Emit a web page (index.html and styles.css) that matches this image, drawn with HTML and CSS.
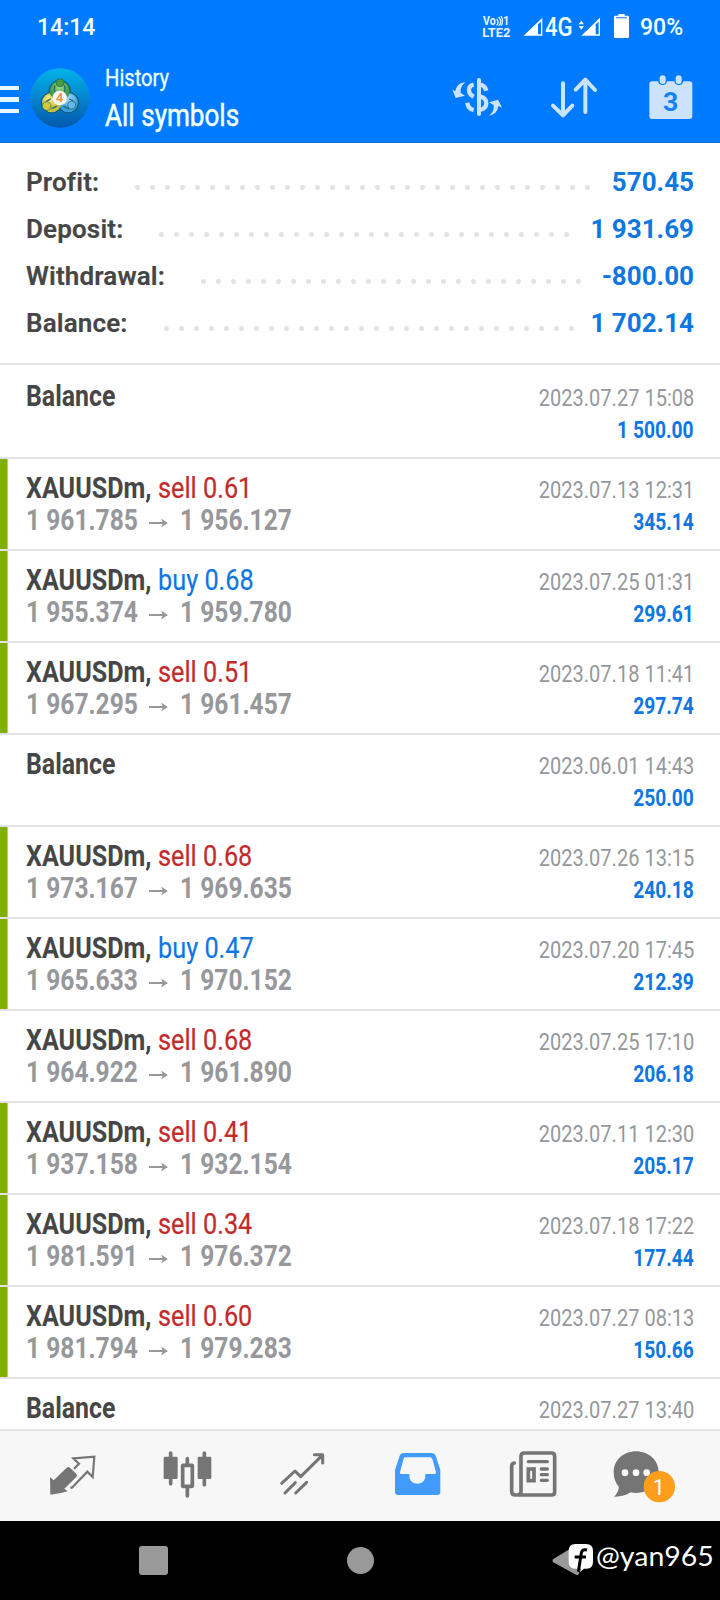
FILE: index.html
```
<!DOCTYPE html>
<html lang="en">
<head>
<meta charset="utf-8">
<title>History</title>
<link rel="stylesheet" href="styles.css">
</head>
<body>
<div class="phone">
  <header class="header">
    <div class="status">
      <span class="clock">14:14</span>
      <div class="status-icons">
        <svg class="volte" width="29" height="48" viewBox="124 0 87 144">
          <text x="127" y="76" textLength="38" lengthAdjust="spacingAndGlyphs">Vo</text>
          <path d="M168 57q8 9 0 19M174 51q12 14 0 26M181 48q9 16 0 29" class="wave"/>
          <text x="187" y="76" textLength="19" lengthAdjust="spacingAndGlyphs">1</text>
          <text x="125" y="112" textLength="84" lengthAdjust="spacingAndGlyphs">LTE2</text>
        </svg>
        <svg class="sig-a" width="20" height="48" viewBox="248 0 60 144"><path fill="#fff" fill-rule="evenodd" d="M250 107 306 53V107zM293 73V103H302V65z"/></svg>
        <span class="net">4G</span>
        <svg class="sig-b" width="23" height="48" viewBox="418 0 69 144"><path fill="#fff" fill-rule="evenodd" d="M428 107 484 53V107zM471 73V103H480V65zM420 73l8-11 8 11zM420 78l8 11 8-11z"/></svg>
        <svg class="battery" width="15" height="48" viewBox="522 0 45 144"><path fill="#fff" fill-rule="evenodd" d="M535 42H554V47H563Q567 47 567 51V110Q567 114 563 114H526Q522 114 522 110V51Q522 47 526 47H535zM528 52V55H561V52z"/></svg>
        <span class="percent">90%</span>
      </div>
    </div>
    <div class="toolbar">
      <div class="burger"><i></i><i></i><i></i></div>
      <svg class="avatar" width="60" height="60" viewBox="0 0 180 180">
        <defs>
          <linearGradient id="sky" x1="0" y1="0" x2="0" y2="1"><stop offset="0" stop-color="#02b4ea"/><stop offset=".5" stop-color="#0684cf"/><stop offset="1" stop-color="#0459ae"/></linearGradient>
          <radialGradient id="gr" cx=".5" cy=".3"><stop offset="0" stop-color="#9fdc88"/><stop offset="1" stop-color="#3a9a48"/></radialGradient>
          <radialGradient id="ye" cx=".4" cy=".3"><stop offset="0" stop-color="#f5ee86"/><stop offset="1" stop-color="#c9c046"/></radialGradient>
          <radialGradient id="bl" cx=".5" cy=".3"><stop offset="0" stop-color="#a5e0ff"/><stop offset="1" stop-color="#3b9ce0"/></radialGradient>
        </defs>
        <circle cx="90" cy="90" r="89" fill="url(#sky)"/>
        <g fill="#0f5a70"><circle cx="89" cy="69" r="33"/><circle cx="65" cy="104" r="32"/><circle cx="115" cy="104" r="32"/></g>
        <circle cx="115" cy="104" r="29" fill="url(#bl)"/>
        <circle cx="65" cy="104" r="29" fill="url(#ye)"/>
        <circle cx="89" cy="69" r="30" fill="url(#gr)"/>
        <g fill="none" stroke="#1d6a66" stroke-width="4" stroke-linecap="round"><path d="M74 54Q72 66 75 76M104 54Q107 66 103 76M61 93Q55 97 50 99M66 121 80 115M118 93Q124 96 128 97M102 115 116 122"/></g>
        <g stroke="#1f5f5a" stroke-width="2">
          <circle cx="90" cy="44" r="12" fill="#45a044"/>
          <circle cx="50" cy="114" r="13" fill="#d2c83e"/>
          <circle cx="125" cy="111" r="12" fill="#62b9ee"/>
        </g>
        <circle cx="89" cy="90" r="22" fill="#f8f6f1"/>
        <text x="89" y="103" class="four">4</text>
      </svg>
      <div class="titles">
        <div class="small-title"><span>History</span></div>
        <div class="big-title"><span>All symbols</span></div>
      </div>
      <svg class="ico-money" width="50" height="95" viewBox="36 144 150 285">
        <g fill="none" stroke="#cbe3ff" stroke-linecap="round">
          <path stroke-width="12" d="M117 240V342"/>
          <path stroke-width="13" stroke-linecap="butt" d="M101 254Q87 257 87 270Q87 283 101 290M101 330Q84 326 82 308M119 254Q135 256 139 272M119 289Q140 293 139 311Q138 326 119 330"/>
        </g>
        <path fill="#cbe3ff" d="M76 247Q50 249 46 274L37 269 47 294 75 287 62 279Q60 260 76 247zM147 347Q172 343 175 318L186 323 174 299 147 307 161 315Q164 334 147 347z"/>
      </svg>
      <svg class="ico-sort" width="48" height="95" viewBox="330 144 144 285">
        <path fill="none" stroke="#cbe3ff" stroke-width="12" stroke-linecap="round" stroke-linejoin="round" d="M369 250V345M339 317 369 346 397 317M436 336V240M407 269 436 239 465 270"/>
      </svg>
      <svg class="ico-cal" width="44" height="95" viewBox="628 144 132 285">
        <rect x="629" y="244" width="129" height="113" rx="9" fill="#cbe3ff"/>
        <rect x="655" y="222" width="27" height="33" rx="13" fill="#007bff"/><rect x="704" y="222" width="27" height="33" rx="13" fill="#007bff"/>
        <rect x="660" y="226" width="18" height="26" rx="9" fill="#cbe3ff"/><rect x="708" y="226" width="18" height="26" rx="9" fill="#cbe3ff"/>
        <text x="693" y="333" class="cal-num">3</text>
      </svg>
    </div>
  </header>

  <section class="summary">
    <div class="sum"><b>Profit:</b><i class="dots d31"></i><em>570.45</em></div>
    <div class="sum"><b>Deposit:</b><i class="dots d28"></i><em>1 931.69</em></div>
    <div class="sum"><b>Withdrawal:</b><i class="dots d26"></i><em>-800.00</em></div>
    <div class="sum"><b>Balance:</b><i class="dots d28"></i><em>1 702.14</em></div>
  </section>

  <main class="list" id="list"></main>

  <nav class="tabs">
    <svg viewBox="45 33 345 270">
      <path fill="#757575" d="M150 171 161 181 200 143Q205 139 210 143L230 163Q233 167 229 171L193 206 203 214Q180 222 151 224z"/>
      <path fill="none" stroke="#757575" stroke-width="6.5" d="M211 203H216L262 155 278 171 283 110 220 115 237 131 222 146"/>
    </svg>
    <svg viewBox="45 33 345 270">
      <g fill="#757575"><rect x="146" y="110" width="42" height="67" rx="4"/><rect x="248" y="110" width="41" height="67" rx="4"/></g>
      <g fill="none" stroke="#757575" stroke-width="11" stroke-linecap="round"><path d="M167 99V191M268 99V194M217 116V133M217 203V228"/><rect x="203" y="136" width="29" height="63" rx="1"/></g>
    </svg>
    <svg viewBox="735 33 345 270">
      <path fill="none" stroke="#757575" stroke-width="9" stroke-linecap="round" stroke-linejoin="round" d="M845 190 885 153 902 170 966 107M943 104H968V129M855 219 886 188M887 219 920 187"/>
    </svg>
    <svg viewBox="0 33 345 270">
      <path fill="#429cff" d="M130 99H216Q224 99 227 107L241 149V216Q241 225 232 225H114Q105 225 105 216V151L119 107Q122 99 130 99z"/>
      <path fill="#f7f7f7" d="M136 112H211Q215 112 217 117L228 156Q229 162 223 162H196Q198 191 172 191Q146 191 148 162H124Q118 162 120 156L131 116Q132 112 136 112z"/>
    </svg>
    <svg viewBox="345 33 345 270">
      <g fill="none" stroke="#757575" stroke-width="11" stroke-linecap="round"><path d="M463 129Q455 130 455 139V214Q455 225 466 225H575Q584 225 584 215V109Q584 99 574 99H493Q483 99 483 109V214Q483 225 472 225"/><path stroke-width="10" d="M505 125H562M544 147H562M544 164H562M544 181H562"/><rect x="505" y="147" width="17" height="35"/></g>
    </svg>
    <svg viewBox="690 33 345 270">
      <path fill="#757575" d="M828 94C866 94 896 120 896 157S866 219 828 219Q820 219 812 217Q790 231 762 230Q775 218 777 201Q761 184 761 157C761 120 790 94 828 94z"/>
      <g fill="#f7f7f7"><circle cx="795" cy="158" r="10"/><circle cx="828" cy="158" r="10"/><circle cx="860" cy="158" r="10"/></g>
      <circle cx="898" cy="200" r="47" fill="#ff9d1c"/>
      <text x="896" y="224" class="badge">1</text>
    </svg>
  </nav>

  <footer class="android">
    <i class="square"></i><i class="circle"></i>
    <svg class="back" width="42" height="79" viewBox="576 303 126 237">
      <path fill="#999" d="M580 417 648 376Q657 372 657 382V460Q656 468 648 464L580 427Q575 422 580 417z"/>
      <path fill="#fff" d="M646 372H678Q699 372 699 393V425Q699 445 680 446H672L660 456 662 446H646Q626 446 626 425V393Q626 372 646 372z"/>
      <path fill="none" stroke="#000" stroke-width="9" d="M681 390Q666 386 664 399L655 455M644 411H678"/>
    </svg>
    <span class="handle"><span>@yan965</span></span>
  </footer>
</div>
<script src="app.js"></script>
</body>
</html>
```
FILE: styles.css
```
* { box-sizing: border-box; }
body { margin: 0; background: #fff; font-family: Roboto, sans-serif; }
i, em { font-style: normal; }
svg { display: block; flex: none; }
.phone { width: 720px; height: 1600px; display: flex; flex-direction: column; overflow: hidden; }
.header { height: 143px; flex: none; background: #007bff; border-bottom: 1px solid #1272d0; color: #f1ffff; }
.status { height: 48px; display: flex; justify-content: space-between; padding: 0 37px 0 37px; }
.clock { font-size: 23px; font-weight: 500; line-height: 55px; }
.status-icons { display: flex; }
.volte text { font: 700 36px Roboto, sans-serif; fill: #e6f6ff; }
.volte .wave { fill: none; stroke: #e6f6ff; stroke-width: 4; }
.sig-a { margin-left: 12px; }
.net { width: 29px; margin-left: 2px; font-size: 26px; font-weight: 500; line-height: 55px; white-space: nowrap; transform: scaleX(.85); transform-origin: left; }
.sig-b { margin-left: 4px; }
.battery { margin-left: 13px; }
.percent { margin-left: 11px; font-size: 23px; font-weight: 500; line-height: 55px; width: 43px; }
.toolbar { height: 94px; display: flex; }
.burger { width: 19px; padding-top: 38px; display: flex; flex-direction: column; gap: 7px; }
.burger i { height: 4.3px; background: #e6f8ff; }
.avatar { margin: 20px 0 0 11px; }
.four { font: 500 38px Roboto, sans-serif; fill: #f08a3c; text-anchor: middle; }
.titles { width: 362px; padding-left: 15px; white-space: nowrap; }
.titles span { display: inline-block; transform-origin: left; }
.small-title { font-size: 24px; line-height: 30px; padding-top: 15px; }
.small-title span { transform: scaleX(.84); -webkit-text-stroke: .3px #f1ffff; }
.big-title { font-size: 32px; line-height: 39px; padding-top: 3px; }
.big-title span { transform: scaleX(.815); -webkit-text-stroke: .5px #f1ffff; }
.ico-sort { margin-left: 48px; }
.ico-cal { margin-left: 51px; }
.cal-num { font: 700 80px Roboto, sans-serif; fill: #1583f5; text-anchor: middle; }

.summary { height: 222px; flex: none; padding: 16px 26px 0; border-bottom: 2px solid #e3e3e3; }
.sum { height: 47px; display: flex; align-items: baseline; font-size: 26px; line-height: 47px; color: #464646; }
.sum b { font-weight: 600; letter-spacing: .15px; -webkit-text-stroke: .2px currentColor; }
.sum em { margin-left: auto; color: #0f77e2; font-weight: 700; }
.dots { height: 5px; align-self: center; margin: 10px 0 0 36px; background: radial-gradient(circle at 2.5px 2.5px, #e3e3e3 2.1px, transparent 2.9px) 0 0 / 15px 5px; }
.d31 { width: 456px; } .d28 { width: 411px; } .d26 { width: 381px; }

.list { flex: 1; min-height: 0; overflow: hidden; padding-top: 2px; }
.row { height: 92px; display: flex; justify-content: space-between; padding: 13px 26px 0 18px; border-bottom: 2px solid #e3e3e3; white-space: nowrap; }
.row::before { content: ""; width: 8px; margin: -13px 0 0 -18px; flex: none; }
.row.win::before { background: linear-gradient(90deg, #7faf00 7px, #b4d068 7px); }
.left { flex: 1; padding-left: 18px; }
.left > div { height: 32px; line-height: 32px; font-size: 29px; display: flex; }
.left span, .right span { display: inline-block; transform-origin: left; }
.sym { color: #464646; font-weight: 700; transform: scaleX(.857); }
.trade .sym { width: 132px; transform: scaleX(.866); }
.side { transform: scaleX(.872); -webkit-text-stroke: .2px currentColor; }
.sell { color: #c22a2c; } .buy { color: #0f77e2; }
.price { color: #96989b; font-weight: 700; transform: scaleX(.847); }
.price.from { width: 123px; }
.arrow { width: 20px; }
.arrow svg { height: 32px; width: 20px; }
.price.to { margin-left: 11px; }
.right { text-align: right; padding-top: 2px; font-size: 24px; line-height: 32px; }
.right div { height: 32px; }
.right span { transform-origin: right; }
.date { color: #96989b; transform: scaleX(.835); }
.sum-val { color: #0f77e2; font-weight: 700; transform: scaleX(.8); }

.tabs { height: 92px; flex: none; display: flex; padding: 0 15px; background: #f7f7f7; border-top: 2px solid #e3e3e3; }
.tabs svg { width: 115px; height: 90px; }
.badge { font: 400 64px Roboto, sans-serif; fill: #fff; text-anchor: middle; }
.android { height: 79px; flex: none; display: flex; background: #000; }
.square { width: 29px; height: 29px; margin: 25px 0 0 139px; border-radius: 3px; background: #999; }
.circle { width: 27px; height: 27px; margin: 26px 0 0 179px; border-radius: 50%; background: #999; }
.back { margin-left: 178px; }
.handle { margin-left: 2px; color: #fff; font: 27px/69px Lato, sans-serif; }
.handle span { display: inline-block; transform: scaleX(1.055); transform-origin: left; }
```
FILE: app.js
```
const rows = [
  ['2023.07.27 15:08', '1 500.00'],
  ['2023.07.13 12:31', '345.14', 'sell 0.61', '1 961.785', '1 956.127', 1],
  ['2023.07.25 01:31', '299.61', 'buy 0.68', '1 955.374', '1 959.780', 1],
  ['2023.07.18 11:41', '297.74', 'sell 0.51', '1 967.295', '1 961.457', 1],
  ['2023.06.01 14:43', '250.00'],
  ['2023.07.26 13:15', '240.18', 'sell 0.68', '1 973.167', '1 969.635', 1],
  ['2023.07.20 17:45', '212.39', 'buy 0.47', '1 965.633', '1 970.152', 1],
  ['2023.07.25 17:10', '206.18', 'sell 0.68', '1 964.922', '1 961.890', 0],
  ['2023.07.11 12:30', '205.17', 'sell 0.41', '1 937.158', '1 932.154', 1],
  ['2023.07.18 17:22', '177.44', 'sell 0.34', '1 981.591', '1 976.372', 1],
  ['2023.07.27 08:13', '150.66', 'sell 0.60', '1 981.794', '1 979.283', 1],
  ['2023.07.27 13:40', '']
];
const arrow = '<svg viewBox="0 0 20 32"><path d="M0 19H16" fill="none" stroke="#96989b" stroke-width="2"/><path d="M12 14.5 19 19 12 23.5 14 19z" fill="#96989b"/></svg>';
document.getElementById('list').innerHTML = rows.map(([date, sum, side, from, to, win]) => `
  <div class="row ${side ? 'trade' : ''} ${win ? 'win' : ''}">
    <div class="left">
      <div><span class="sym">${side ? 'XAUUSDm,' : 'Balance'}</span>${side ? `<span class="side ${side.split(' ')[0]}">${side}</span>` : ''}</div>
      ${side ? `<div><span class="price from">${from}</span><span class="arrow">${arrow}</span><span class="price to">${to}</span></div>` : ''}
    </div>
    <div class="right"><div><span class="date">${date}</span></div><div><span class="sum-val">${sum}</span></div></div>
  </div>`).join('');
```
